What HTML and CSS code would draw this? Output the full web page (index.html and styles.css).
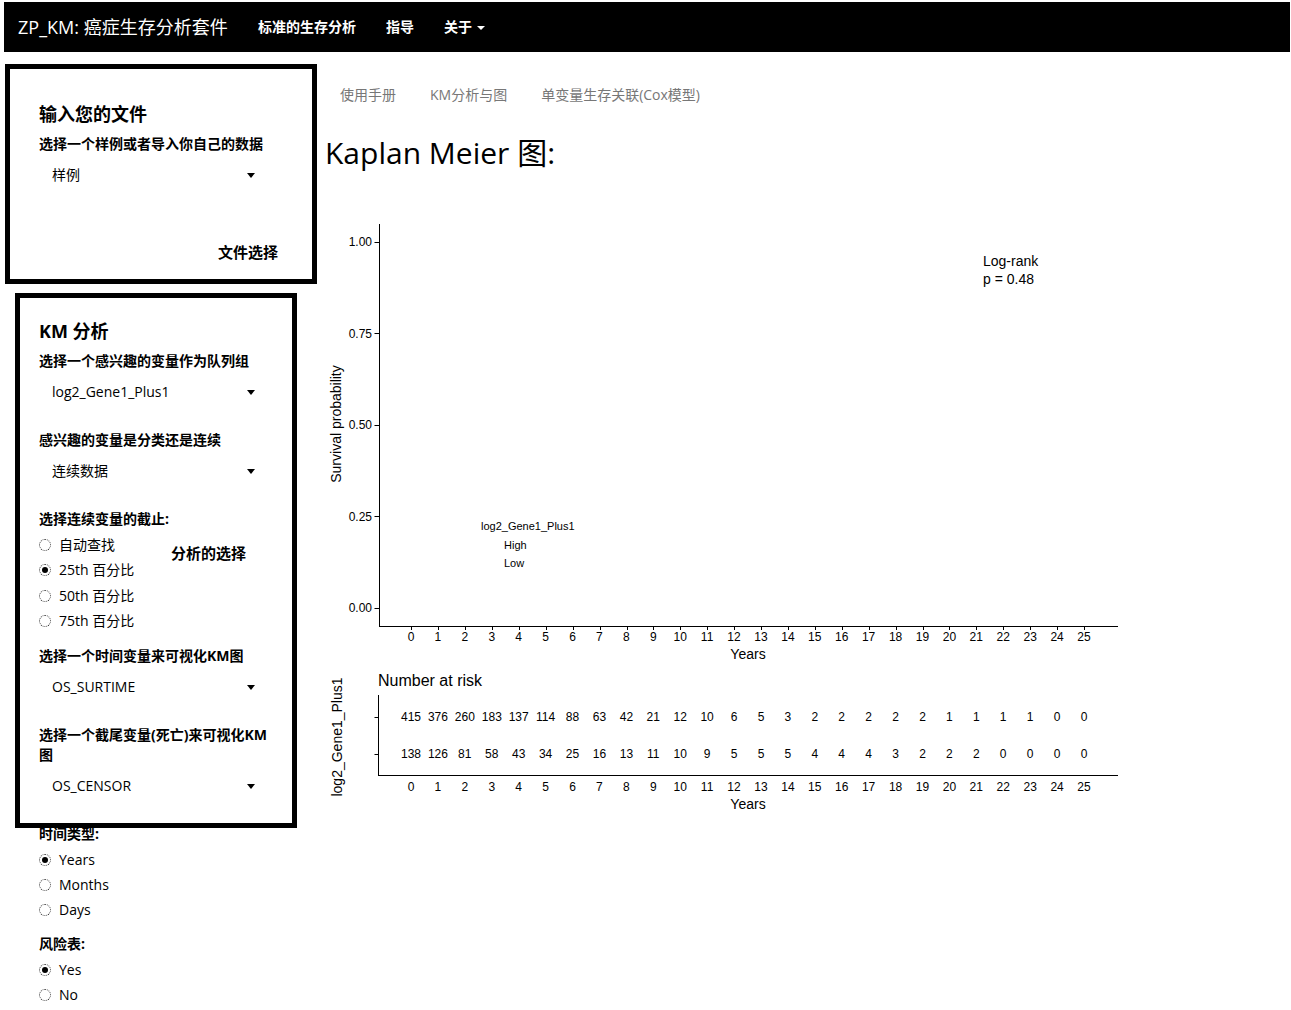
FILE: index.html
```html
<!DOCTYPE html>
<html lang="zh">
<head>
<meta charset="utf-8">
<title>ZP_KM: 癌症生存分析套件</title>
<link rel="stylesheet" href="styles.css">
</head>
<body>
<div class="app">
  <header class="navbar">
    <div class="brand">ZP_KM: 癌症生存分析套件</div>
    <ul class="nav">
      <li>标准的生存分析</li>
      <li>指导</li>
      <li>关于<span class="nav-caret"></span></li>
    </ul>
  </header>

  <div class="page">
    <aside class="sidebar">
      <div class="sidebar-inner">
        <section class="section-file">
          <h4 class="panel-title">输入您的文件</h4>
          <div class="field-label">选择一个样例或者导入你自己的数据</div>
          <div class="select"><span>样例</span><span class="caret"></span></div>
        </section>

        <section class="section-km">
          <h4 class="panel-title">KM 分析</h4>
          <div class="field-label">选择一个感兴趣的变量作为队列组</div>
          <div class="select"><span>log2_Gene1_Plus1</span><span class="caret"></span></div>

          <div class="field-label">感兴趣的变量是分类还是连续</div>
          <div class="select"><span>连续数据</span><span class="caret"></span></div>

          <div class="field-label">选择连续变量的截止:</div>
          <div class="radios radios-wide">
            <div class="radio"><span class="radio-dot"></span><span>自动查找</span></div>
            <div class="radio checked"><span class="radio-dot"></span><span>25th 百分比</span></div>
            <div class="radio"><span class="radio-dot"></span><span>50th 百分比</span></div>
            <div class="radio"><span class="radio-dot"></span><span>75th 百分比</span></div>
          </div>

          <div class="field-label">选择一个时间变量来可视化KM图</div>
          <div class="select"><span>OS_SURTIME</span><span class="caret"></span></div>

          <div class="field-label">选择一个截尾变量(死亡)来可视化KM图</div>
          <div class="select"><span>OS_CENSOR</span><span class="caret"></span></div>

          <div class="field-label">时间类型:</div>
          <div class="radios">
            <div class="radio checked"><span class="radio-dot"></span><span>Years</span></div>
            <div class="radio"><span class="radio-dot"></span><span>Months</span></div>
            <div class="radio"><span class="radio-dot"></span><span>Days</span></div>
          </div>

          <div class="field-label">风险表:</div>
          <div class="radios radios-last">
            <div class="radio checked"><span class="radio-dot"></span><span>Yes</span></div>
            <div class="radio"><span class="radio-dot"></span><span>No</span></div>
          </div>
        </section>
      </div>
    </aside>

    <main class="main">
      <ul class="tabs">
        <li>使用手册</li>
        <li>KM分析与图</li>
        <li>单变量生存关联(Cox模型)</li>
      </ul>
      <h2 class="plot-title">Kaplan Meier 图:</h2>

      <svg class="km-plot" width="800" height="600" viewBox="0 0 800 600" xmlns="http://www.w3.org/2000/svg">
        <g class="axis-lines" stroke="#000" stroke-width="1" fill="none">
          <line x1="54.5" y1="9" x2="54.5" y2="411.5"/>
          <line x1="54" y1="411.5" x2="793" y2="411.5"/>
          <line x1="49.5" y1="27.5" x2="54.5" y2="27.5"/>
          <line x1="49.5" y1="118.5" x2="54.5" y2="118.5"/>
          <line x1="49.5" y1="210.5" x2="54.5" y2="210.5"/>
          <line x1="49.5" y1="301.5" x2="54.5" y2="301.5"/>
          <line x1="49.5" y1="393.5" x2="54.5" y2="393.5"/>
          <line x1="86.5" y1="411" x2="86.5" y2="415"/>
          <line x1="113.5" y1="411" x2="113.5" y2="415"/>
          <line x1="140.5" y1="411" x2="140.5" y2="415"/>
          <line x1="167.5" y1="411" x2="167.5" y2="415"/>
          <line x1="194.5" y1="411" x2="194.5" y2="415"/>
          <line x1="221.5" y1="411" x2="221.5" y2="415"/>
          <line x1="248.5" y1="411" x2="248.5" y2="415"/>
          <line x1="275.5" y1="411" x2="275.5" y2="415"/>
          <line x1="302.5" y1="411" x2="302.5" y2="415"/>
          <line x1="328.5" y1="411" x2="328.5" y2="415"/>
          <line x1="355.5" y1="411" x2="355.5" y2="415"/>
          <line x1="382.5" y1="411" x2="382.5" y2="415"/>
          <line x1="409.5" y1="411" x2="409.5" y2="415"/>
          <line x1="436.5" y1="411" x2="436.5" y2="415"/>
          <line x1="463.5" y1="411" x2="463.5" y2="415"/>
          <line x1="490.5" y1="411" x2="490.5" y2="415"/>
          <line x1="517.5" y1="411" x2="517.5" y2="415"/>
          <line x1="544.5" y1="411" x2="544.5" y2="415"/>
          <line x1="571.5" y1="411" x2="571.5" y2="415"/>
          <line x1="598.5" y1="411" x2="598.5" y2="415"/>
          <line x1="624.5" y1="411" x2="624.5" y2="415"/>
          <line x1="651.5" y1="411" x2="651.5" y2="415"/>
          <line x1="678.5" y1="411" x2="678.5" y2="415"/>
          <line x1="705.5" y1="411" x2="705.5" y2="415"/>
          <line x1="732.5" y1="411" x2="732.5" y2="415"/>
          <line x1="759.5" y1="411" x2="759.5" y2="415"/>
          <line x1="53.5" y1="480" x2="53.5" y2="560.5"/>
          <line x1="53" y1="560.5" x2="793" y2="560.5"/>
          <line x1="49.5" y1="502.5" x2="53.5" y2="502.5"/>
          <line x1="49.5" y1="539.5" x2="53.5" y2="539.5"/>
        </g>

        <g class="tick-text ytick" text-anchor="end">
          <text x="47" y="27">1.00</text>
          <text x="47" y="118.5">0.75</text>
          <text x="47" y="210">0.50</text>
          <text x="47" y="301.5">0.25</text>
          <text x="47" y="393">0.00</text>
        </g>

        <g class="tick-text" text-anchor="middle">
          <text x="86" y="422">0</text><text x="112.9" y="422">1</text><text x="139.8" y="422">2</text><text x="166.8" y="422">3</text><text x="193.7" y="422">4</text><text x="220.6" y="422">5</text><text x="247.5" y="422">6</text><text x="274.4" y="422">7</text><text x="301.4" y="422">8</text><text x="328.3" y="422">9</text><text x="355.2" y="422">10</text><text x="382.1" y="422">11</text><text x="409" y="422">12</text><text x="436" y="422">13</text><text x="462.9" y="422">14</text><text x="489.8" y="422">15</text><text x="516.7" y="422">16</text><text x="543.6" y="422">17</text><text x="570.6" y="422">18</text><text x="597.5" y="422">19</text><text x="624.4" y="422">20</text><text x="651.3" y="422">21</text><text x="678.2" y="422">22</text><text x="705.2" y="422">23</text><text x="732.1" y="422">24</text><text x="759" y="422">25</text>
        </g>

        <text class="axis-title" x="423" y="439" text-anchor="middle">Years</text>
        <text class="axis-title" transform="translate(11 209) rotate(-90)" text-anchor="middle">Survival probability</text>

        <text class="axis-title" x="658" y="46">Log-rank</text>
        <text class="axis-title" x="658" y="64">p = 0.48</text>

        <g class="legend-text">
          <text x="156" y="311">log2_Gene1_Plus1</text>
          <text x="179" y="330">High</text>
          <text x="179" y="348">Low</text>
        </g>

        <text class="risk-title" x="53" y="465">Number at risk</text>
        <text class="axis-title" transform="translate(12 522) rotate(-90)" text-anchor="middle">log2_Gene1_Plus1</text>

        <g class="tick-text" text-anchor="middle">
          <text x="86" y="502">415</text><text x="112.9" y="502">376</text><text x="139.8" y="502">260</text><text x="166.8" y="502">183</text><text x="193.7" y="502">137</text><text x="220.6" y="502">114</text><text x="247.5" y="502">88</text><text x="274.4" y="502">63</text><text x="301.4" y="502">42</text><text x="328.3" y="502">21</text><text x="355.2" y="502">12</text><text x="382.1" y="502">10</text><text x="409" y="502">6</text><text x="436" y="502">5</text><text x="462.9" y="502">3</text><text x="489.8" y="502">2</text><text x="516.7" y="502">2</text><text x="543.6" y="502">2</text><text x="570.6" y="502">2</text><text x="597.5" y="502">2</text><text x="624.4" y="502">1</text><text x="651.3" y="502">1</text><text x="678.2" y="502">1</text><text x="705.2" y="502">1</text><text x="732.1" y="502">0</text><text x="759" y="502">0</text>
          <text x="86" y="539">138</text><text x="112.9" y="539">126</text><text x="139.8" y="539">81</text><text x="166.8" y="539">58</text><text x="193.7" y="539">43</text><text x="220.6" y="539">34</text><text x="247.5" y="539">25</text><text x="274.4" y="539">16</text><text x="301.4" y="539">13</text><text x="328.3" y="539">11</text><text x="355.2" y="539">10</text><text x="382.1" y="539">9</text><text x="409" y="539">5</text><text x="436" y="539">5</text><text x="462.9" y="539">5</text><text x="489.8" y="539">4</text><text x="516.7" y="539">4</text><text x="543.6" y="539">4</text><text x="570.6" y="539">3</text><text x="597.5" y="539">2</text><text x="624.4" y="539">2</text><text x="651.3" y="539">2</text><text x="678.2" y="539">0</text><text x="705.2" y="539">0</text><text x="732.1" y="539">0</text><text x="759" y="539">0</text>
          <text x="86" y="572">0</text><text x="112.9" y="572">1</text><text x="139.8" y="572">2</text><text x="166.8" y="572">3</text><text x="193.7" y="572">4</text><text x="220.6" y="572">5</text><text x="247.5" y="572">6</text><text x="274.4" y="572">7</text><text x="301.4" y="572">8</text><text x="328.3" y="572">9</text><text x="355.2" y="572">10</text><text x="382.1" y="572">11</text><text x="409" y="572">12</text><text x="436" y="572">13</text><text x="462.9" y="572">14</text><text x="489.8" y="572">15</text><text x="516.7" y="572">16</text><text x="543.6" y="572">17</text><text x="570.6" y="572">18</text><text x="597.5" y="572">19</text><text x="624.4" y="572">20</text><text x="651.3" y="572">21</text><text x="678.2" y="572">22</text><text x="705.2" y="572">23</text><text x="732.1" y="572">24</text><text x="759" y="572">25</text>
        </g>
        <text class="axis-title" x="423" y="589" text-anchor="middle">Years</text>
      </svg>
    </main>
  </div>

  <div class="anno-box anno-file"></div>
  <div class="anno-label anno-label-file">文件选择</div>
  <div class="anno-box anno-km"></div>
  <div class="anno-label anno-label-km">分析的选择</div>
</div>
</body>
</html>
```

FILE: styles.css
```css
* {
  box-sizing: border-box;
}

html,
body {
  margin: 0;
  padding: 0;
  overflow: hidden;
}

body {
  font-family: "Open Sans", "Noto Sans CJK SC", sans-serif;
  font-size: 14px;
  line-height: 20px;
  color: #000;
  background: #fff;
}

.app {
  position: relative;
  width: 1291px;
  height: 1010px;
}

/* Navbar */
.navbar {
  margin: 2px 1px 0 4px;
  height: 50px;
  background: #000;
  color: #fff;
  display: flex;
  align-items: center;
  padding-left: 14px;
}

.brand {
  width: 240px;
  font-size: 18px;
  flex: none;
}

.nav {
  display: flex;
  gap: 30px;
  list-style: none;
  margin: 0;
  padding: 0;
  font-size: 14px;
  font-weight: 700;
}

.nav li {
  display: flex;
  align-items: center;
}

.nav-caret {
  display: inline-block;
  width: 0;
  height: 0;
  border-left: 4px solid transparent;
  border-right: 4px solid transparent;
  border-top: 4px solid #fff;
  margin-left: 5px;
  margin-top: 2px;
}

/* Page layout */
.page {
  display: flex;
}

.sidebar {
  width: 325px;
  flex: none;
  padding-left: 39px;
}

.sidebar-inner {
  width: 232px;
}

.section-file {
  padding-top: 52px;
}

.section-km {
  padding-top: 108px;
}

.panel-title {
  margin: 0 0 10px;
  font-size: 18px;
  line-height: 20px;
  font-weight: 700;
}

.field-label {
  font-weight: 700;
  font-size: 14px;
  line-height: 20px;
  margin-bottom: 4px;
}

.select {
  height: 34px;
  display: flex;
  align-items: center;
  justify-content: space-between;
  padding: 0 16px 0 13px;
  margin-bottom: 21px;
}

.caret {
  width: 0;
  height: 0;
  border-left: 4px solid transparent;
  border-right: 4px solid transparent;
  border-top: 5px solid #000;
}

.radios {
  margin-top: -1px;
  margin-bottom: 12px;
}

.radios-wide .radio {
  height: 25.5px;
}

.radio {
  display: flex;
  align-items: center;
  height: 25px;
}

.radio-dot {
  width: 12px;
  height: 12px;
  border-radius: 50%;
  border: 1px dotted #333;
  margin-right: 8px;
  display: flex;
  align-items: center;
  justify-content: center;
  flex: none;
}

.radio.checked .radio-dot::after {
  content: "";
  width: 6px;
  height: 6px;
  border-radius: 50%;
  background: #000;
}

.radios-last {
  margin-bottom: 0;
}

/* Main */
.main {
  flex: 1;
  padding-top: 23px;
}

.tabs {
  display: flex;
  list-style: none;
  margin: 0;
  padding: 0;
  color: #777;
}

.tabs li {
  padding: 10px 15px;
  margin-right: 4px;
  line-height: 20px;
}

.plot-title {
  margin: 20px 0 0;
  font-size: 30px;
  line-height: 36px;
  font-weight: 400;
}

.km-plot {
  display: block;
  margin-top: 44px;
  font-family: "Liberation Sans", Arial, sans-serif;
}

.km-plot text {
  dominant-baseline: central;
  fill: #000;
}

.tick-text {
  font-size: 12px;
}

.axis-title {
  font-size: 14px;
}

.legend-text {
  font-size: 11px;
}

.risk-title {
  font-size: 16px;
}

/* Annotation overlays */
.anno-box {
  position: absolute;
  border: 5px solid #000;
  pointer-events: none;
}

.anno-file {
  left: 5px;
  top: 62px;
  width: 312px;
  height: 220px;
}

.anno-km {
  left: 15px;
  top: 291px;
  width: 282px;
  height: 535px;
}

.anno-label {
  position: absolute;
  font-size: 15px;
  line-height: 20px;
  font-weight: 700;
}

.anno-label-file {
  left: 218px;
  top: 240px;
}

.anno-label-km {
  left: 171px;
  top: 541px;
}
```
